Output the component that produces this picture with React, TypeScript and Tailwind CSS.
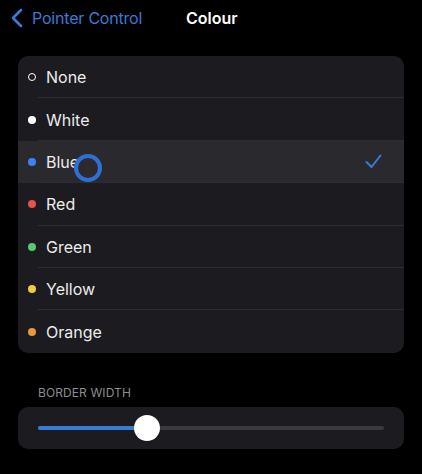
import React from 'react';

const colours = [
  { name: 'None', dot: 'border-[1.5px] border-white bg-transparent' },
  { name: 'White', dot: 'bg-white' },
  { name: 'Blue', dot: 'bg-[#3b82f6]' },
  { name: 'Red', dot: 'bg-[#e5534b]' },
  { name: 'Green', dot: 'bg-[#5cc96b]' },
  { name: 'Yellow', dot: 'bg-[#f2cc3f]' },
  { name: 'Orange', dot: 'bg-[#e89b3a]' },
];

const App: React.FC = () => {
  return (
    <div className="w-[422px] h-[474px] bg-black overflow-hidden font-['Inter','Liberation_Sans',sans-serif] text-white">
      {/* Nav bar */}
      <div className="h-[35px] flex items-center relative">
        <div className="flex items-center pl-[11px]">
          <svg width="12" height="20" viewBox="0 0 12 20" className="mr-[9px]">
            <path d="M10 2 L2 10 L10 18" fill="none" stroke="#3a7bd5" strokeWidth="2.6" strokeLinecap="round" strokeLinejoin="round" />
          </svg>
          <span className="text-[16px] text-[#3a7bd5] tracking-[-0.2px]">Pointer Control</span>
        </div>
        <span className="absolute left-[186px] text-[16px] font-semibold">Colour</span>
      </div>

      {/* Colour list */}
      <div className="mt-[21px] mx-[18px] bg-[#1c1b1f] rounded-[10px] overflow-hidden">
        {colours.map((c, i) => {
          const selected = c.name === 'Blue';
          return (
            <div
              key={c.name}
              className={`relative h-[42.4px] flex items-center pl-[10px] pr-[22px] ${selected ? 'bg-[#2a292e]' : ''}`}
            >
              <span className={`w-[8px] h-[8px] rounded-full ${c.dot}`} />
              <span className="ml-[10px] text-[16px] text-[#ececec]">{c.name}</span>
              {selected && (
                <>
                  {/* pointer ring */}
                  <span className="absolute left-[56px] top-[13px] w-[28px] h-[28px] rounded-full border-[4px] border-[#2f6fd6] bg-[#2c2b30]/80" />
                  <svg width="17" height="15" viewBox="0 0 17 15" className="ml-auto">
                    <path d="M1.5 8 L6.5 13 L15.5 1.5" fill="none" stroke="#3a7bd5" strokeWidth="2" strokeLinecap="round" strokeLinejoin="round" />
                  </svg>
                </>
              )}
              {i < colours.length - 1 && (
                <div className="absolute bottom-0 left-[20px] right-0 h-px bg-[#2e2d32]" />
              )}
            </div>
          );
        })}
      </div>

      {/* Border width */}
      <div className="mt-[31px] pl-[38px] text-[12px] text-[#8c8c90] tracking-[0.1px]">BORDER WIDTH</div>
      <div className="mt-[5px] mx-[18px] h-[42px] bg-[#1c1b1f] rounded-[10px] flex items-center px-[20px]">
        <div className="relative w-full h-[4px] rounded-full bg-[#3a393d]">
          <div className="absolute left-0 top-0 h-full w-[110px] rounded-full bg-[#3a7bd5]" />
          <div className="absolute left-[96px] top-[-11px] w-[26px] h-[26px] rounded-full bg-white shadow" />
        </div>
      </div>
    </div>
  );
};

export default App;
